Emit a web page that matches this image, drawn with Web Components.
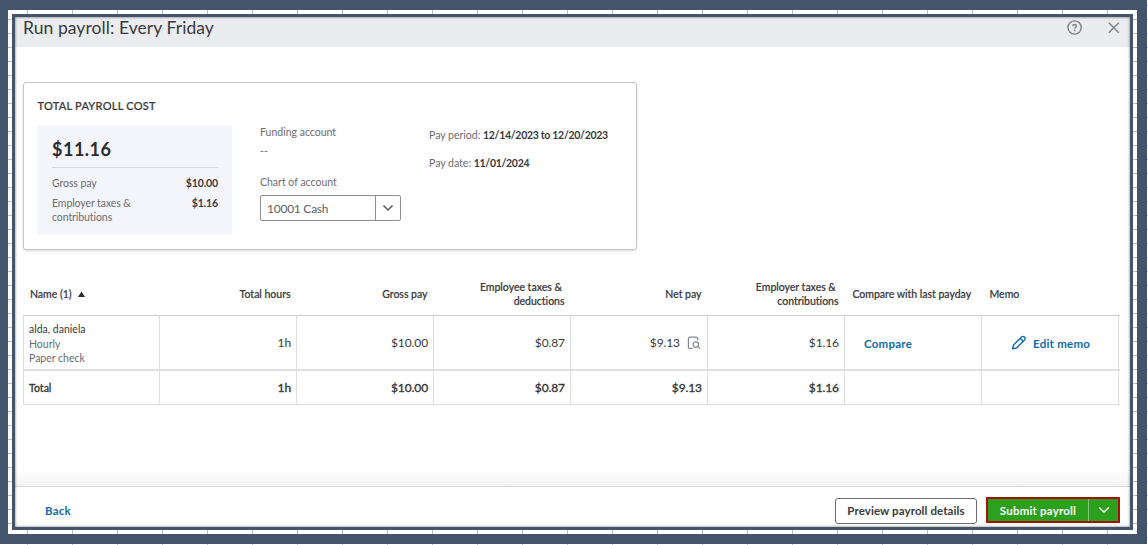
<!DOCTYPE html>
<html lang="en">
<head>
<meta charset="utf-8">
<title>Run payroll</title>
<style>
  body {
    margin: 0;
    overflow: hidden;
    font-family: Lato, "Liberation Sans", sans-serif;
    font-size: 11px;
    color: #393a3d;
  }
</style>
</head>
<body>
<window-frame>
  <payroll-header slot="header">Run payroll: Every Friday</payroll-header>
  <payroll-summary></payroll-summary>
  <payroll-table></payroll-table>
  <payroll-footer slot="footer"></payroll-footer>
</window-frame>

<script>
function define(name, html) {
  const template = document.createElement("template");
  template.innerHTML = html;

  customElements.define(name, class extends HTMLElement {
    constructor() {
      super();
      this.attachShadow({ mode: "open" }).appendChild(template.content.cloneNode(true));
    }
  });
}

define("window-frame", `
  <style>
    :host {
      display: block;
      box-sizing: border-box;
      width: 1148px;
      height: 545px;
      padding: 0 1px 1px 0;
      background-color: #fff;
      background-image:
        linear-gradient(90deg, #b9bdc3 1px, transparent 1px),
        linear-gradient(#b9bdc3 1px, transparent 1px);
      background-size: 45px 14px;
      background-position: 27px 5px;
    }
    .outer {
      box-sizing: border-box;
      height: 544px;
      border: solid #44546a;
      border-width: 10px 10px 10px 8px;
      padding: 4px;
    }
    .inner {
      position: relative;
      box-sizing: border-box;
      height: 516px;
      border: 3px solid #44546a;
      background: #fff;
      display: flex;
      flex-direction: column;
    }
    .inner::after {
      content: "";
      position: absolute;
      inset: 0;
      box-shadow: inset 0 0 3px 0 rgba(20, 25, 35, 0.6);
      pointer-events: none;
    }
    main {
      flex: 1;
      padding: 35px 11px 0 8px;
      background: linear-gradient(transparent 423px, #f3f3f4 439px);
    }
  </style>
  <div class="outer">
    <div class="inner">
      <slot name="header"></slot>
      <main><slot></slot></main>
      <slot name="footer"></slot>
    </div>
  </div>
`);

define("payroll-header", `
  <style>
    :host {
      display: flex;
      align-items: flex-start;
      box-sizing: border-box;
      height: 30px;
      padding: 0 9px 0 8px;
      background: #ebecf0;
      font-size: 17.5px;
      line-height: 22px;
      letter-spacing: 0.07px;
    }
    .title { flex: 1; }
    svg {
      margin-top: 3px;
      fill: none;
      stroke: #7d8086;
      stroke-width: 1.4;
    }
    .close { margin-left: 24px; }
  </style>
  <div class="title"><slot></slot></div>
  <svg width="16" height="16" viewBox="0 0 16 16">
    <circle cx="7.6" cy="7.5" r="6.6"/>
    <path d="M5.8 6.2c0-2.4 3.6-2.3 3.6-.1 0 1.4-1.7 1.2-1.7 2.6M7.7 9.8v1.4"/>
  </svg>
  <svg class="close" width="14" height="16" viewBox="0 0 14 16">
    <path d="M1.8 2.7l10 10M11.8 2.7L1.8 12.7"/>
  </svg>
`);

define("account-select", `
  <style>
    :host {
      display: flex;
      box-sizing: border-box;
      width: 141px;
      height: 26px;
      border: 1px solid #8d9096;
      border-radius: 2px;
      font-size: 12px;
      line-height: 26px;
      letter-spacing: -0.25px;
      color: #5c5f65;
    }
    .value { flex: 1; padding-left: 6px; }
    .arrow {
      display: grid;
      place-items: center;
      width: 24px;
      border-left: 1px solid #8d9096;
    }
    svg { fill: none; stroke: #55585e; stroke-width: 1.5; }
  </style>
  <div class="value"><slot></slot></div>
  <div class="arrow">
    <svg width="12" height="8" viewBox="0 0 12 8"><path d="M1.5 1.5L6 6l4.5-4.5"/></svg>
  </div>
`);

define("payroll-summary", `
  <style>
    :host {
      display: flex;
      box-sizing: border-box;
      width: 614px;
      height: 168px;
      padding: 14px 14px 0 14px;
      border: 1px solid #c3c5c9;
      border-radius: 3px;
      box-shadow: 0 1px 2px rgba(0, 0, 0, 0.15);
      font-size: 10.5px;
      line-height: 14px;
      letter-spacing: 0;
      color: #6b6c72;
    }
    b { color: #393a3d; }
    h2 {
      margin: 0 0 0 -0.5px;
      font-size: 11px;
      font-weight: 500;
      line-height: 17px;
      letter-spacing: 0.25px;
      color: #393a3d;
      -webkit-text-stroke: 0.2px;
    }
    .panel {
      box-sizing: border-box;
      width: 194px;
      height: 110px;
      margin-top: 11px;
      padding: 11px 14px 0;
      border-radius: 2px;
      background: #f4f5fa;
    }
    .amount {
      height: 32px;
      box-sizing: border-box;
      border-bottom: 1px solid #d7d9de;
      font-size: 18px;
      font-weight: 700;
      line-height: 26px;
      letter-spacing: 0.5px;
      color: #2b2c30;
    }
    .line {
      display: flex;
      justify-content: space-between;
      margin-top: 8px;
    }
    .line + .line { margin-top: 6px; }
    .line span { letter-spacing: -0.08px; }
    .line b { letter-spacing: -0.1px; }
    .account { width: 141px; margin: 28px 0 0 28px; }
    .account div { margin-bottom: 5px; }
    .account .label { margin: 17px 0 6px; }
    .period { margin: 31px 0 0 28px; white-space: nowrap; }
    .period div { margin-bottom: 14px; }
    .period b { letter-spacing: -0.3px; }
  </style>
  <div>
    <h2>TOTAL PAYROLL COST</h2>
    <div class="panel">
      <div class="amount">$11.16</div>
      <div class="line"><span>Gross pay</span><b>$10.00</b></div>
      <div class="line"><span>Employer taxes &amp;<br>contributions</span><b>$1.16</b></div>
    </div>
  </div>
  <div class="account">
    <div>Funding account</div>
    <div>--</div>
    <div class="label">Chart of account</div>
    <account-select>10001 Cash</account-select>
  </div>
  <div class="period">
    <div>Pay period: <b>12/14/2023 to 12/20/2023</b></div>
    <div>Pay date: <b>11/01/2024</b></div>
  </div>
`);

define("payroll-table", `
  <style>
    :host {
      display: block;
      width: 1097px;
      margin-top: 22px;
    }
    .row {
      display: grid;
      grid-template-columns: repeat(8, 137px);
      box-sizing: border-box;
      width: 1097px;
    }
    .row > div {
      box-sizing: border-box;
      display: flex;
      align-items: center;
      justify-content: flex-end;
      text-align: right;
    }
    .head {
      height: 43px;
      padding-top: 1px;
      font-size: 10.5px;
      font-weight: 500;
      line-height: 14px;
      letter-spacing: -0.02px;
      -webkit-text-stroke: 0.2px;
    }
    .head > div { padding-right: 6.5px; white-space: nowrap; }
    .row > .start { justify-content: flex-start; text-align: left; }
    .head .start { padding: 0 0 0 7.5px; }
    .head .name { padding-left: 7px; }
    .head svg { margin-left: 6px; }
    .body, .total { font-size: 12px; letter-spacing: -0.1px; }
    .body > div, .total > div {
      border-right: 1px solid #dcdee1;
      padding: 0 5px 0 6px;
    }
    .body > div:first-child, .total > div:first-child { border-left: 1px solid #dcdee1; }
    .body { height: 54px; border-top: 1px solid #c9ccd1; }
    .total {
      height: 36px;
      border-top: 2px solid #dcdee1;
      border-bottom: 1px solid #dcdee1;
      font-weight: 500;
      -webkit-text-stroke: 0.3px;
    }
    .body .person, .total .person { font-size: 10.5px; padding-left: 5px; letter-spacing: 0; }
    .body .person { padding-top: 2px; }
    .person p { margin: 0; line-height: 14px; color: #6b6c72; }
    .person p:first-child { margin-bottom: 1px; color: #393a3d; }
    .link { color: #0f6cac; font-weight: 700; font-size: 11.5px; letter-spacing: 0.25px; }
    .body .compare { padding: 2px 0 0 19px; }
    .body .edit { padding-left: 29px; }
    .edit svg { margin-right: 6px; }
    .edit span { padding-top: 2px; }
    .icon { margin: 0 1px 0 7px; fill: none; stroke: #85888e; stroke-width: 1.2; }
  </style>
  <div class="row head">
    <div class="start name">Name (1)
      <svg width="7" height="6" viewBox="0 0 7 6"><path d="M3.5 0.5L7 6H0z" fill="#2b2c30"/></svg>
    </div>
    <div>Total hours</div>
    <div>Gross pay</div>
    <div>Employee taxes &amp;&nbsp;<br>deductions</div>
    <div>Net pay</div>
    <div>Employer taxes &amp;&nbsp;<br>contributions</div>
    <div class="start">Compare with last payday</div>
    <div class="start">Memo</div>
  </div>
  <div class="row body">
    <div class="start person">
      <div><p>alda, daniela</p><p>Hourly</p><p>Paper check</p></div>
    </div>
    <div>1h</div>
    <div>$10.00</div>
    <div>$0.87</div>
    <div>$9.13
      <svg class="icon" width="14" height="14" viewBox="0 0 14 14">
        <path d="M5.5 12.4H2.6Q1.4 12.4 1.4 11.2V2.4Q1.4 1.2 2.6 1.2H8.6Q10.8 1.2 10.8 3.2V4.2"/>
        <circle cx="8.8" cy="8.6" r="2.7"/>
        <path d="M10.8 10.6l2.2 2.2"/>
      </svg>
    </div>
    <div>$1.16</div>
    <div class="start compare link">Compare</div>
    <div class="start edit link">
      <svg width="16" height="16" viewBox="0 0 16 16" fill="none" stroke="#0f6cac" stroke-width="1.4" stroke-linejoin="round">
        <path d="M1.6 13.9L2.5 10L10.6 1.9Q12 .8 13.4 2Q14.8 3.5 13.6 4.9L5.5 13ZM9.2 3.3L12.2 6.3"/>
      </svg>
      <span>Edit memo</span>
    </div>
  </div>
  <div class="row total">
    <div class="start person">Total</div>
    <div>1h</div>
    <div>$10.00</div>
    <div>$0.87</div>
    <div>$9.13</div>
    <div>$1.16</div>
    <div></div>
    <div></div>
  </div>
`);

define("submit-button", `
  <style>
    :host {
      display: flex;
      box-sizing: border-box;
      width: 134px;
      height: 26px;
      border: 2px solid #a80f0a;
      background: #2ca01c;
      color: #fff;
      line-height: 24px;
    }
    .label { flex: 1; text-align: center; }
    .arrow {
      display: grid;
      place-items: center;
      width: 29px;
      border-left: 1px solid #83c77a;
    }
    svg { fill: none; stroke: #fff; stroke-width: 1.4; }
  </style>
  <div class="label"><slot></slot></div>
  <div class="arrow">
    <svg width="12" height="8" viewBox="0 0 12 8"><path d="M1.2 1.5L6 6l4.8-4.5"/></svg>
  </div>
`);

define("payroll-footer", `
  <style>
    :host {
      display: flex;
      align-items: flex-start;
      box-sizing: border-box;
      height: 41px;
      padding: 10px 10px 0 30px;
      border-top: 1px solid #d8d9dc;
      background: #fff;
      font-size: 11.5px;
      font-weight: 700;
      letter-spacing: 0.2px;
    }
    .back { flex: 1; line-height: 28px; color: #0f6cac; }
    .preview {
      box-sizing: border-box;
      width: 142px;
      height: 26px;
      margin: 1px 9px 0 0;
      border: 1px solid #6b6c72;
      border-radius: 3px;
      line-height: 24px;
      letter-spacing: 0.1px;
      text-align: center;
    }
  </style>
  <div class="back">Back</div>
  <div class="preview">Preview payroll details</div>
  <submit-button>Submit payroll</submit-button>
`);
</script>
</body>
</html>
